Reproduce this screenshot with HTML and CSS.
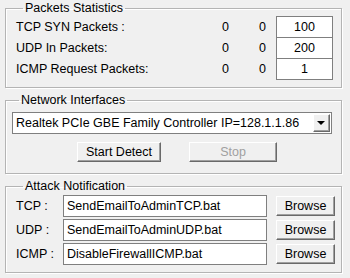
FILE: index.html
```html
<!DOCTYPE html>
<html>
<head>
<meta charset="utf-8">
<link rel="stylesheet" href="styles.css">
</head>
<body>
<div class="panel">
  <fieldset class="group stats">
    <legend>Packets Statistics</legend>
    <div class="stat-row">
      <span class="label">TCP SYN Packets :</span>
      <span class="num">0</span>
      <span class="num num2">0</span>
      <span class="box">100</span>
    </div>
    <div class="stat-row">
      <span class="label">UDP In Packets:</span>
      <span class="num">0</span>
      <span class="num num2">0</span>
      <span class="box">200</span>
    </div>
    <div class="stat-row">
      <span class="label">ICMP Request Packets:</span>
      <span class="num">0</span>
      <span class="num num2">0</span>
      <span class="box">1</span>
    </div>
  </fieldset>

  <fieldset class="group net">
    <legend>Network Interfaces</legend>
    <div class="combo">
      <span class="combo-text">Realtek PCIe GBE Family Controller IP=128.1.1.86</span>
      <span class="combo-btn"><span class="tri"></span></span>
    </div>
    <div class="btn-row">
      <span class="btn start">Start Detect</span>
      <span class="btn stop disabled">Stop</span>
    </div>
  </fieldset>

  <fieldset class="group attack">
    <legend>Attack Notification</legend>
    <div class="att-row">
      <span class="label">TCP :</span>
      <span class="field">SendEmailToAdminTCP.bat</span>
      <span class="btn browse">Browse</span>
    </div>
    <div class="att-row">
      <span class="label">UDP :</span>
      <span class="field">SendEmailToAdminUDP.bat</span>
      <span class="btn browse">Browse</span>
    </div>
    <div class="att-row">
      <span class="label">ICMP :</span>
      <span class="field">DisableFirewallICMP.bat</span>
      <span class="btn browse">Browse</span>
    </div>
  </fieldset>
</div>
</body>
</html>
```

FILE: styles.css
```css
html, body {
  margin: 0;
  padding: 0;
  background: #f0f0f0;
}
body {
  font-family: "Liberation Sans", Arial, sans-serif;
  font-size: 12.5px;
  color: #000;
  width: 350px;
  height: 278px;
  overflow: hidden;
}
.panel {
  padding: 1px 8px 0 5px;
  display: flex;
  flex-direction: column;
}
.group {
  margin: 0;
  border: 1px solid #b4b4b4;
  box-shadow: inset 1px 1px 0 #fff, 1px 1px 0 #fff;
  padding: 0 8px 0 10px;
  min-width: 0;
}
.group legend {
  padding: 0 2px;
  margin-left: 7px;
  line-height: 14px;
  height: 14px;
}
/* Packets statistics */
.stats {
  padding-top: 1px;
  padding-bottom: 7px;
}
.stat-row {
  display: grid;
  grid-template-columns: 1fr 30px 47px 57px;
  align-items: center;
  height: 22px;
}
.stat-row + .stat-row {
  margin-top: -1px;
}
.num {
  text-align: right;
}
.num2 {
  padding-right: 10px;
}
.box {
  box-sizing: border-box;
  height: 22px;
  background: #fff;
  border: 1px solid #7f7f7f;
  text-align: center;
  line-height: 20px;
}
/* Network */
.net {
  margin-top: 5px;
  padding: 5px 9px 11px 6px;
}
.combo {
  box-sizing: border-box;
  height: 22px;
  background: #fff;
  border: 1px solid #7f7f7f;
  display: flex;
  align-items: center;
  padding: 1px;
}
.combo-text {
  flex: 1;
  padding-left: 2px;
  white-space: nowrap;
  overflow: hidden;
}
.combo-btn {
  box-sizing: border-box;
  width: 17px;
  height: 18px;
  background: #f0f0f0;
  border: 1px solid;
  border-color: #fff #696969 #696969 #fff;
  box-shadow: inset -1px -1px 0 #a0a0a0;
  display: flex;
  align-items: center;
  justify-content: center;
}
.tri {
  width: 0;
  height: 0;
  border-left: 4px solid transparent;
  border-right: 4px solid transparent;
  border-top: 4px solid #000;
  margin-left: -1px;
}
.btn-row {
  display: flex;
  margin-top: 8px;
  padding-left: 65px;
  gap: 28px;
}
.btn {
  box-sizing: border-box;
  height: 20px;
  background: #f0f0f0;
  border: 1px solid;
  border-color: #fff #696969 #696969 #fff;
  box-shadow: inset -1px -1px 0 #a0a0a0;
  display: flex;
  align-items: center;
  justify-content: center;
}
.start { width: 84px; }
.stop { width: 88px; }
.disabled { color: #a0a0a0; }
/* Attack */
.attack {
  margin-top: 5px;
  padding: 2px 8px 7px 10px;
}
.att-row {
  display: grid;
  grid-template-columns: 38px 204px 59px;
  column-gap: 9px;
  align-items: center;
  height: 22px;
}
.att-row + .att-row {
  margin-top: 2px;
}
.field {
  box-sizing: border-box;
  height: 22px;
  background: #fff;
  border: 1px solid #7f7f7f;
  padding-left: 3px;
  line-height: 20px;
  white-space: nowrap;
  overflow: hidden;
}
.browse {
  height: 20px;
}
```
